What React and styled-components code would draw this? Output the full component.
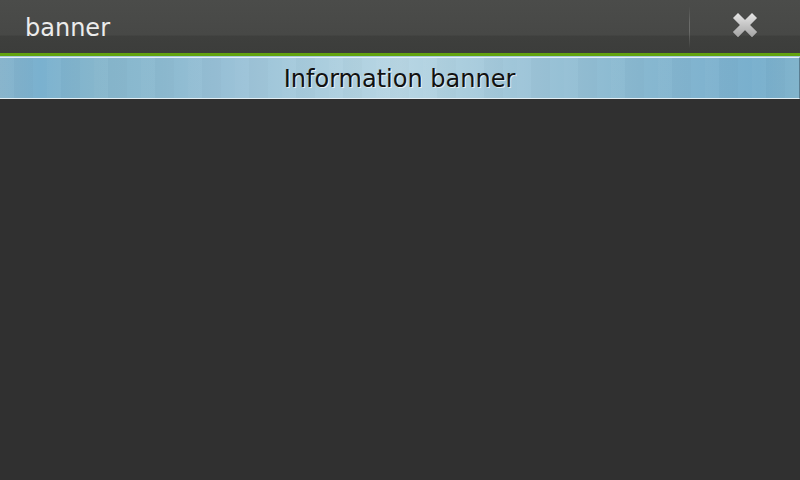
import styled, { createGlobalStyle } from 'styled-components'

const GlobalStyle = createGlobalStyle`
  html, body {
    margin: 0;
    padding: 0;
    background: #303030;
    font-family: "DejaVu Sans", "Liberation Sans", sans-serif;
  }
  #root {
    width: 800px;
    height: 480px;
    overflow: hidden;
  }
`

const Screen = styled.div`
  width: 800px;
  height: 480px;
  display: flex;
  flex-direction: column;
  background: #303030;
`

const TitleBar = styled.div`
  flex: 0 0 auto;
  box-sizing: border-box;
  height: 56px;
  display: flex;
  align-items: stretch;
  background: linear-gradient(to bottom, #4b4c4a 0%, #474846 66%, #3e3f3d 68%, #3c3d3b 100%);
  border-bottom: 3px solid #62a30f;
`

const Title = styled.div`
  flex: 1;
  display: flex;
  align-items: center;
  padding-left: 25px;
  padding-top: 3px;
  color: #ececec;
  font-size: 24px;
`

const Divider = styled.div`
  width: 1px;
  margin: 6px 0 5px;
  background: linear-gradient(to bottom, #4a4b49, #6a6b69 40%, #6a6b69 60%, #3e3f3d);
`

const CloseButton = styled.div`
  width: 110px;
  display: flex;
  align-items: center;
  justify-content: center;
  padding-bottom: 4px;
`

const Peek = styled.div`
  flex: 0 0 1px;
  height: 1px;
  overflow: hidden;
  text-align: center;
  background: #a6c8da;
`

const PeekText = styled.div`
  color: #ffffff;
  font-size: 24px;
  line-height: 24px;
  transform: translateY(-20px);
`

const Banner = styled.div`
  flex: 0 0 auto;
  height: 40px;
  display: flex;
  align-items: center;
  justify-content: center;
  border-top: 1px solid #e2eef4;
  border-bottom: 1px solid #e2eef4;
  border-right: 1px solid #5a7e92;
  background:
    repeating-linear-gradient(to right,
      rgba(255, 255, 255, 0.025) 0px, rgba(255, 255, 255, 0.025) 14px,
      rgba(0, 0, 0, 0.015) 14px, rgba(0, 0, 0, 0.015) 33px,
      rgba(255, 255, 255, 0) 33px, rgba(255, 255, 255, 0) 47px),
    linear-gradient(to right,
      #86b3cb 0%, #7ab1cf 5%, #86b6cc 12%, #8cbad0 20%, #98c0d6 28%,
      #a4c9db 36%, #b0d1e0 44%, #b8d6e4 50%, #aed0df 56%, #a0c6d9 64%,
      #94bfd4 72%, #88b8d0 80%, #80b3cf 88%, #78afcd 95%, #82b4cc 100%);
`

const BannerText = styled.div`
  color: #111;
  font-size: 24px;
  padding-top: 1px;
  text-shadow: 1px 1px 0 rgba(255, 255, 255, 0.7);
`

function CloseIcon() {
  return (
    <svg width="28" height="28" viewBox="0 0 28 28">
      <defs>
        <linearGradient id="xg" x1="0" y1="0" x2="0" y2="1">
          <stop offset="0" stopColor="#e6e6e6" />
          <stop offset="1" stopColor="#a4a4a4" />
        </linearGradient>
      </defs>
      <path
        d="M7 2 L14 9 L21 2 L26 7 L19 14 L26 21 L21 26 L14 19 L7 26 L2 21 L9 14 L2 7 Z"
        fill="url(#xg)"
        stroke="#9a9a9a"
        strokeWidth="0.6"
        strokeLinejoin="round"
      />
    </svg>
  )
}

export default function App() {
  return (
    <>
      <GlobalStyle />
      <Screen>
        <TitleBar>
          <Title>banner</Title>
          <Divider />
          <CloseButton>
            <CloseIcon />
          </CloseButton>
        </TitleBar>
        <Peek>
          <PeekText>Information banner</PeekText>
        </Peek>
        <Banner>
          <BannerText>Information banner</BannerText>
        </Banner>
      </Screen>
    </>
  )
}
